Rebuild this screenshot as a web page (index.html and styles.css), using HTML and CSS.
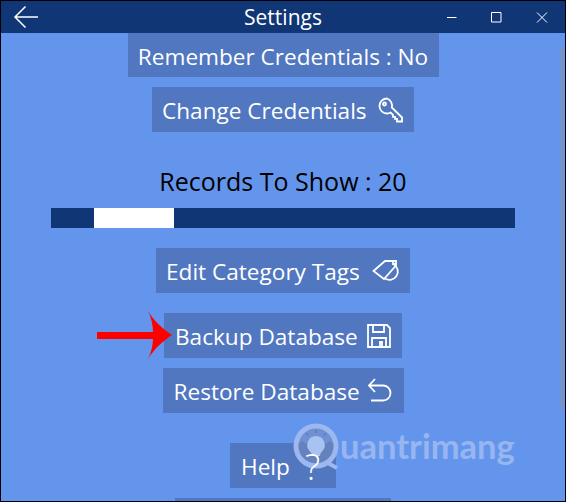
FILE: index.html
```html
<!DOCTYPE html>
<html lang="en">
<head>
<meta charset="utf-8">
<title>Settings</title>
<link rel="stylesheet" href="styles.css">
</head>
<body>
<div class="window">
  <header class="titlebar">
    <svg class="back" viewBox="0 0 26 24" width="26" height="24"><path d="M25 12H2M12.500 1.500 2 12l10.500 10.500"/></svg>
    <h1 class="title">Settings</h1>
    <div class="controls">
      <svg viewBox="0 0 12 12" width="12" height="12"><path d="M1 6.500h9.500"/></svg>
      <svg viewBox="0 0 12 12" width="12" height="12"><path d="M.5 1.500h9.500v9.500H.5z"/></svg>
      <svg viewBox="0 0 12 12" width="12" height="12"><path d="M1 1.500l10 10M11 1.500l-10 10"/></svg>
    </div>
  </header>
  <main class="content">
    <div class="btn btn-remember">Remember Credentials : No</div>
    <div class="btn btn-change">Change Credentials
      <svg class="icon" viewBox="0 0 26 26" width="26" height="26"><path d="M9 1.500a7.500 7.500 0 1 0 0 15 7.500 7.500 0 0 0 3.700-1l2.300 2.300v2h2v2h2v2.700h5v-4L13.800 10.500A7.500 7.500 0 0 0 9 1.500z"/><circle cx="6.500" cy="7" r="1.500"/></svg>
    </div>
    <div class="records">Records To Show : 20</div>
    <div class="slider"><div class="thumb"></div></div>
    <div class="btn btn-tags">Edit Category Tags
      <svg class="icon" viewBox="0 0 28 26" width="28" height="26"><path d="M1.500 13 13 3h11v4.500L12 21z"/><path d="M22 6.500a8 8 0 0 1-9 14"/><path d="M21 3v3h3"/></svg>
    </div>
    <div class="btn btn-backup">Backup Database
      <svg class="icon" viewBox="0 0 24 24" width="24" height="24"><path d="M1 1h19l3 3v19H1z"/><path d="M6 1v7h11V1M5 23v-9h14v9M13 23v-5h2v5"/></svg>
    </div>
    <div class="btn btn-restore">Restore Database
      <svg class="icon" viewBox="0 0 26 26" width="26" height="26"><path d="M8 1 2 7.500 8 14M2 7.500h14a7.500 7.500 0 0 1 0 15H4"/></svg>
    </div>
    <div class="btn btn-help">Help<span class="qmark">?</span></div>
    <div class="btn btn-last"></div>
    <div class="scrollbar"></div>
  </main>
  <svg class="arrow" viewBox="0 0 76 48" width="76" height="48"><path d="M0 21H56C56 14 54 6 51 0C57 10 66 18 75 24C66 30 57 38 51 48C54 42 56 34 56 28H0z"/></svg>
  <div class="watermark">
    <svg class="wm-logo" viewBox="0 0 48 48" width="48" height="48">
      <circle class="wm-disc" cx="24" cy="24" r="20"/>
      <path class="wm-tail" d="M34 40l11 6"/>
      <path class="wm-bulb" d="M24 14a9 9 0 0 0-6 15.500c1.500 1.500 2 3 2 4.500h8c0-1.500.5-3 2-4.500A9 9 0 0 0 24 14z"/>
      <path class="wm-rays" d="M24 8v3M14 11l2 2.500M34 11l-2 2.500M9 20l3 1M39 20l-3 1"/>
    </svg>
    <span class="wm-text">uantrimang</span>
  </div>
</div>
</body>
</html>
```
FILE: styles.css
```css
* { box-sizing: border-box; }
html, body { margin: 0; padding: 0; }
body { width: 566px; height: 502px; overflow: hidden; background: #000; }
.window {
  position: relative;
  width: 566px;
  height: 502px;
  border: 1px solid #000;
  background: #6495ed;
  overflow: hidden;
  font-family: "Open Sans", "Noto Sans", sans-serif;
  color: #fff;
}
.titlebar {
  height: 32px;
  background: #113676;
  display: flex;
  align-items: center;
  justify-content: center;
  position: relative;
}
.title { margin: 0; font-size: 21px; font-weight: 400; line-height: 32px; }
.back { position: absolute; left: 12px; top: 4px; fill: none; stroke: #fff; stroke-width: 1.500; }
.controls { position: absolute; right: 17px; top: 10px; display: flex; gap: 33px; }
.controls svg { fill: none; stroke: #fff; stroke-width: 1; }
.content {
  height: 468px;
  display: flex;
  flex-direction: column;
  align-items: center;
  position: relative;
}
.btn {
  display: flex;
  align-items: center;
  justify-content: space-between;
  padding: 2px 10px 0;
  height: 45px;
  background: #5077bf;
  font-size: 22.600px;
  white-space: nowrap;
  flex: none;
}
.icon { fill: none; stroke: #fff; stroke-width: 1.800; flex: none; margin-top: -2px; }
.btn-remember { width: 311px; height: 44px; justify-content: center; }
.btn-change { width: 262px; margin-top: 10px; }
.records { margin-top: 31px; height: 36px; line-height: 36px; font-size: 25px; color: #000; flex: none; }
.slider { width: 464px; height: 20px; margin-top: 9px; background: #113676; padding-left: 43px; flex: none; }
.thumb { width: 80px; height: 20px; background: #fff; }
.btn-tags { width: 254px; margin-top: 20px; }
.btn-backup { width: 238px; margin-top: 20px; padding: 2px 11px 0; }
.btn-restore { width: 241px; margin-top: 10px; padding: 2px 11px 0; }
.btn-help { width: 106px; margin-top: 30px; justify-content: flex-start; padding-left: 11px; }
.qmark { position: relative; z-index: 2; margin-left: 15px; font-size: 36px; font-weight: 300; line-height: 40px; }
.btn-last { width: 216px; margin-top: 10px; }
.scrollbar { position: absolute; right: 2px; top: 16px; width: 2px; height: 360px; background: #8a8fa0; }
.arrow { position: absolute; left: 96px; top: 310px; fill: #f00; }
.watermark { position: absolute; left: 291px; top: 421px; display: flex; align-items: center; pointer-events: none; }
.wm-logo { flex: none; }
.wm-disc { fill: rgba(120,140,190,.55); stroke: #9db8ee; stroke-width: 5; }
.wm-tail { fill: none; stroke: #9db8ee; stroke-width: 4; }
.wm-bulb { fill: #a8c2f2; }
.wm-rays { fill: none; stroke: #5f7cc0; stroke-width: 1.500; }
.wm-text { font-family: "Lato", sans-serif; font-weight: 700; font-size: 34.500px; line-height: 48px; color: #97b6f0; }
```
